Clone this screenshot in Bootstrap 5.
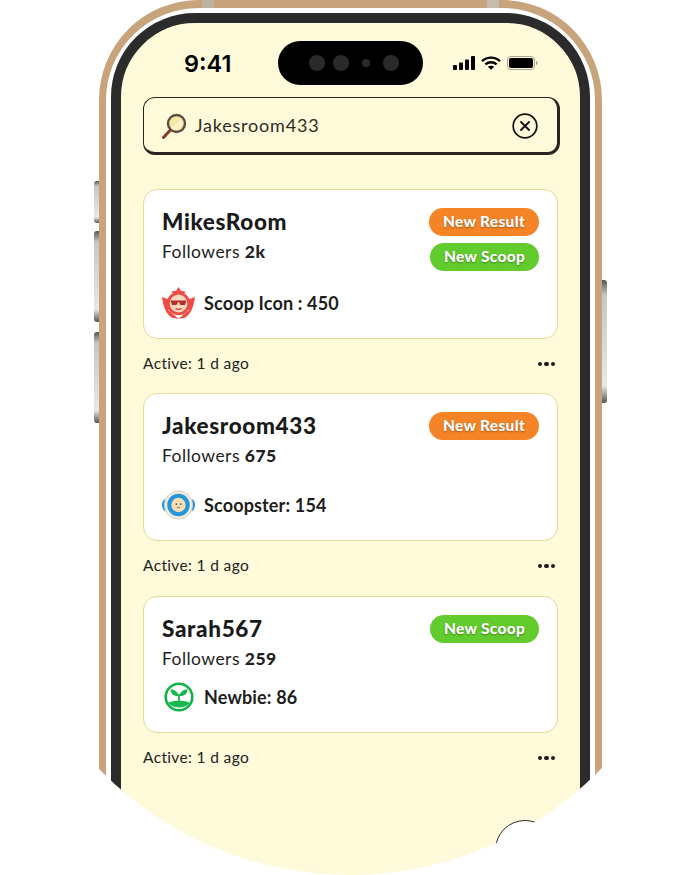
<!DOCTYPE html>
<html lang="en">
<head>
<meta charset="utf-8">
<title>Search results</title>
<link href="https://cdn.jsdelivr.net/npm/bootstrap@5.3.0/dist/css/bootstrap.min.css" rel="stylesheet">
<style>
html,body{margin:0;background:#fff;overflow:hidden;width:700px;height:875px}
body{font-family:"Lato","Liberation Sans",sans-serif;color:#1d1d1b}
.stage{position:relative;width:700px;height:875px;overflow:hidden;clip-path:path("M0 0H700V525A350 350 0 0 1 0 525Z")}
.hw-btn{position:absolute;width:5px;border-radius:3px 0 0 3px;background:linear-gradient(180deg,#555 0,#c6c6c2 12%,#e8e8e4 86%,#555 100%)}
.b1{left:94px;top:181px;height:42px}
.b2{left:94px;top:231px;height:91px}
.b3{left:94px;top:332px;height:91px}
.b4{left:602px;top:280px;height:123px;border-radius:0 3px 3px 0}
.cam-a{position:absolute;left:202px;top:0;width:12px;height:8px;background:#bdb3a4}
.cam-b{position:absolute;left:487px;top:0;width:12px;height:8px;background:#c5bcae}
.bezel{margin-left:99px;width:503px;height:1000px;border:7px solid #c7a47c;border-top-width:8px;border-radius:100px;padding:5px;background:#fff}
.frame{height:100%;border:10px solid #2b2b2b;border-radius:84px;background:#fffad9;padding:0 22px;position:relative}
.status{height:74px;padding:6px 19px 0 63px;margin:0 -22px}
.clock{font-family:Inter,sans-serif;font-weight:600;font-size:23.5px;line-height:1;color:#000;width:94px;padding-top:2px}
.island{width:145px;height:44px;background:#000;border-radius:22px;gap:8px;padding-left:31px}
.lens{width:16px;height:16px;border-radius:50%;background:#2a2a2a;display:block;flex:none}
.lens.tiny{width:8px;height:8px;margin:0 5px}
.sys{gap:6px;margin-left:30px}
.search{width:417px;height:58px;border:1.5px solid #2a2420;border-right-width:3px;border-bottom-width:3px;border-radius:12px;padding:1px 19px 0 17px;font-size:18px;margin-bottom:34px}
.search span{margin-left:8px;color:#2f2a26;letter-spacing:.8px}
.result{width:415px;border:1px solid #e5da96;border-radius:14px;padding:17px 18px 0 18px;background:#fff}
.c1{height:150px}.c2{height:148px}.c3{height:137px}
.nm{font-size:22.5px;font-weight:900;line-height:30px;color:#1a1a1a;letter-spacing:.65px}
.fl{font-size:17.5px;line-height:24px;margin-top:3px;color:#222;letter-spacing:.45px}
.fl b{font-weight:900}
.tier{font-size:18px;font-weight:700;line-height:32px;color:#1d1d1b;gap:9px;letter-spacing:.15px}
.m1{margin-top:16px}.m2{margin-top:21px}.m3{margin-top:10px}
.tier svg{display:block;flex:none}
.pills{gap:7px;margin-top:1px}
.pill{width:110px;height:28px;display:flex;align-items:center;justify-content:center;border-radius:14px;color:#fff;font-size:15.5px;font-weight:900;text-shadow:0 1px 2px rgba(0,0,0,.35);padding:0;letter-spacing:.3px}
.pill.o{background:#f58426}
.pill.g{background:#62cc2e}
.pill.s{width:109px;margin-left:1px}
.foot{width:415px;height:24px;margin:13px 0 17px;font-size:15.5px;color:#222;letter-spacing:.35px}
.foot.wide{margin-bottom:18px}
.more{gap:2px;padding-right:3px}
.more i{display:block;width:4.5px;height:4.5px;border-radius:50%;background:#1d1d1b}
.fab{position:absolute;left:495px;top:820px;width:60px;height:60px;border:1.2px solid #2a2a2a;border-radius:50%;background:#fff}
</style>
</head>
<body>
<div class="stage">
  <div class="bezel">
    <div class="frame">
      <div class="status d-flex align-items-center">
        <div class="clock">9:41</div>
        <div class="island d-flex align-items-center">
          <span class="lens"></span><span class="lens"></span><span class="lens tiny"></span><span class="lens"></span>
        </div>
        <div class="sys d-flex align-items-center">
          <svg width="22" height="14" viewBox="0 0 22 14"><rect x="0" y="9" width="4" height="5" rx="1"/><rect x="6" y="6.5" width="4" height="7.5" rx="1"/><rect x="12" y="3.5" width="4" height="10.5" rx="1"/><rect x="18" y="0" width="4" height="14" rx="1"/></svg>
          <svg width="20" height="14" viewBox="0 0 20 14" fill="none" stroke="#000" stroke-width="2.4"><path d="M1 5.200C6 .4 14 .4 19 5.200"/><path d="M4.400 8.400C7.600 5.500 12.400 5.500 15.600 8.400"/><path d="M10 13.800 6.800 10.800C8.700 9.300 11.300 9.300 13.200 10.800Z" fill="#000" stroke="none"/></svg>
          <svg width="31" height="14" viewBox="0 0 31 14"><rect x=".5" y=".5" width="27" height="13" rx="3.500" fill="none" stroke="#a8a48f"/><rect x="2" y="2" width="24" height="10" rx="2" fill="#000"/><path d="M29 5v4c1-.3 1.600-1.100 1.600-2S30 5.300 29 5z" fill="#a8a48f"/></svg>
        </div>
      </div>
      <div class="search d-flex align-items-center">
        <svg width="26" height="26" viewBox="0 0 26 26" class="flex-none">
          <path d="M2.500 24.500 9.200 17.300" stroke="#8a3a22" stroke-width="3" stroke-linecap="round"/>
          <circle cx="15.500" cy="10.500" r="8.500" fill="#f4e7a3" stroke="#5a4a42" stroke-width="2.400"/>
          <path d="M10 15 20 6c2 2.500 2 6.500-.5 9s-6.500 2.500-9.500 0z" fill="#fbf3c4"/>
        </svg>
        <span class="flex-grow-1">Jakesroom433</span>
        <svg width="26" height="26" viewBox="0 0 26 26" fill="none" stroke="#111" stroke-width="1.700"><circle cx="13" cy="13" r="11.800"/><path d="M9 9l8 8M17 9l-8 8" stroke-linecap="round" stroke-width="1.900"/></svg>
      </div>

      <div class="card result c1">
        <div class="d-flex justify-content-between">
          <div>
            <div class="nm">MikesRoom</div>
            <div class="fl">Followers <b>2k</b></div>
          </div>
          <div class="pills d-flex flex-column">
            <span class="badge pill o">New Result</span>
            <span class="badge pill g s">New Scoop</span>
          </div>
        </div>
        <div class="tier m1 d-flex align-items-center">
          <svg width="33" height="32" viewBox="0 0 33 32">
            <path d="M16.500 0l2.300 3.700 4.700.8-2.500 3.500H12l-2.500-3.500 4.700-.8z" fill="#ef4b45"/>
            <path d="M0 10l7 2.500-.5 11L12 28l4.500 4-7-1.500C3 26 1 17 0 10zM33 10l-7 2.500.5 11L21 28l-4.500 4 7-1.500C30 26 32 17 33 10z" fill="#ef4b45"/>
            <circle cx="16.500" cy="16.500" r="10.300" fill="#fbd8bd" stroke="#ef4b45" stroke-width="2.800"/>
            <path d="M9 13.500h15v1.300l-1 3.200h-4.500L17 15h-1l-1.500 3H10l-1-3.200z" fill="#b92c28"/>
            <path d="M13.500 21.500c2 1.100 4 1.100 6 0" stroke="#c8322e" stroke-width="1.200" fill="none"/>
          </svg>
          <span>Scoop Icon : 450</span>
        </div>
      </div>
      <div class="foot d-flex align-items-center justify-content-between">
        <span>Active: 1 d ago</span>
        <span class="more d-flex"><i></i><i></i><i></i></span>
      </div>

      <div class="card result c2">
        <div class="d-flex justify-content-between">
          <div>
            <div class="nm">Jakesroom433</div>
            <div class="fl">Followers <b>675</b></div>
          </div>
          <div class="pills d-flex flex-column">
            <span class="badge pill o">New Result</span>
          </div>
        </div>
        <div class="tier m2 d-flex align-items-center">
          <svg width="33" height="32" viewBox="0 0 34 32">
            <ellipse cx="4.500" cy="16" rx="4.500" ry="6.500" fill="#2396dc"/><ellipse cx="29.500" cy="16" rx="4.500" ry="6.500" fill="#2396dc"/>
            <circle cx="17" cy="16" r="14.500" fill="#f3ecdc" stroke="#d4cfc6"/>
            <circle cx="17" cy="16" r="9.500" fill="#fcdcb4" stroke="#2396dc" stroke-width="4.200"/>
            <circle cx="14.800" cy="15" r=".9" fill="#4a4a4a"/><circle cx="19.200" cy="15" r=".9" fill="#4a4a4a"/>
            <path d="M15.300 18.200c1.100.7 2.300.7 3.400 0" stroke="#4a4a4a" fill="none" stroke-width=".8"/>
          </svg>
          <span>Scoopster: 154</span>
        </div>
      </div>
      <div class="foot wide d-flex align-items-center justify-content-between">
        <span>Active: 1 d ago</span>
        <span class="more d-flex"><i></i><i></i><i></i></span>
      </div>

      <div class="card result c3">
        <div class="d-flex justify-content-between">
          <div>
            <div class="nm">Sarah567</div>
            <div class="fl">Followers <b>259</b></div>
          </div>
          <div class="pills d-flex flex-column">
            <span class="badge pill g s">New Scoop</span>
          </div>
        </div>
        <div class="tier m3 d-flex align-items-center">
          <svg width="33" height="30" viewBox="0 0 33 30">
            <circle cx="17" cy="15" r="13.300" fill="#fff" stroke="#0fb44a" stroke-width="2.600"/>
            <path d="M17 14C15 8 11 7 8.500 7.500c0 4 3 7 8.500 6.500zM17 14c2-6 6-7 8.500-6.500 0 4-3 7-8.500 6.500z" fill="#17b84f"/>
            <path d="M17 12v8" stroke="#17b84f" stroke-width="1.800"/>
            <path d="M6.500 20.500c5-2.500 16-2.500 21 0-3 6.500-18 6.500-21 0z" fill="#17b84f"/>
          </svg>
          <span>Newbie: 86</span>
        </div>
      </div>
      <div class="foot d-flex align-items-center justify-content-between">
        <span>Active: 1 d ago</span>
        <span class="more d-flex"><i></i><i></i><i></i></span>
      </div>
    </div>
  </div>
  <div class="cam-a"></div><div class="cam-b"></div>
  <div class="hw-btn b1"></div><div class="hw-btn b2"></div><div class="hw-btn b3"></div><div class="hw-btn b4"></div>
  <div class="fab"></div>
</div>
<script src="https://cdn.jsdelivr.net/npm/bootstrap@5.3.0/dist/js/bootstrap.bundle.min.js"></script>
</body>
</html>
